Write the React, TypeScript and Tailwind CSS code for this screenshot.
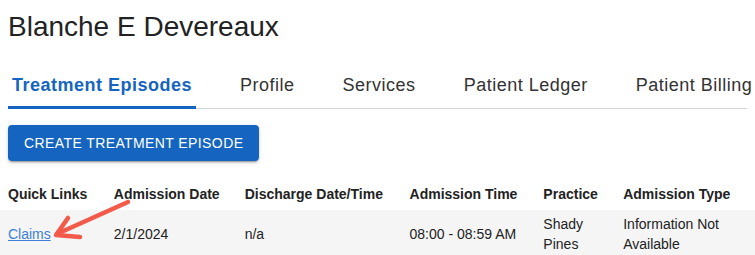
import React from "react";

const tabs = ["Treatment Episodes", "Profile", "Services", "Patient Ledger", "Patient Billing"];

const columns = [
  { label: "Quick Links", w: "w-[106px]" },
  { label: "Admission Date", w: "w-[131px]" },
  { label: "Discharge Date/Time", w: "w-[165px]" },
  { label: "Admission Time", w: "w-[134px]" },
  { label: "Practice", w: "w-[80px]" },
  { label: "Admission Type", w: "w-[140px]" },
];

export default function App() {
  return (
    <div
      className="relative h-[255px] w-full overflow-hidden bg-white text-[#222]"
      style={{ fontFamily: '"Liberation Sans", Arial, sans-serif' }}
    >
      <div className="px-2">
        <h1 className="mt-[11px] text-[28px] leading-[32px] font-normal text-[#222]">
          Blanche E Devereaux
        </h1>

        <div className="mt-[18px] flex h-12 gap-[40px] border-b border-[#d2d4d6] whitespace-nowrap">
          {tabs.map((t, i) => (
            <div
              key={t}
              className={
                i === 0
                  ? "relative flex items-center px-1 pt-px text-[18px] font-bold tracking-[0.5px] text-[#1565c0]"
                  : "relative flex items-center px-1 pt-px text-[18px] tracking-[0.5px] text-[#333]"
              }
            >
              {t}
              {i === 0 && (
                <span className="absolute right-0 -bottom-px left-0 h-[3px] bg-[#1565c0]" />
              )}
            </div>
          ))}
        </div>

        <button className="mt-4 h-9 rounded bg-[#1565c0] px-4 text-[14px] tracking-[0.4px] text-white uppercase shadow-[0_3px_1px_-2px_rgba(0,0,0,0.2),0_2px_2px_0_rgba(0,0,0,0.14),0_1px_5px_0_rgba(0,0,0,0.12)]">
          Create Treatment Episode
        </button>
      </div>

      <table className="mt-[17px] table-fixed border-collapse text-left text-[14px]">
        <thead>
          <tr className="h-8">
            {columns.map((c) => (
              <th key={c.label} className={`${c.w} px-2 font-bold whitespace-nowrap text-[#222]`}>
                {c.label}
              </th>
            ))}
          </tr>
        </thead>
        <tbody>
          <tr className="bg-[#f5f5f5] leading-5">
            <td className="px-2 py-1">
              <a className="text-[#3d80d3] underline">Claims</a>
            </td>
            <td className="px-2 py-1">2/1/2024</td>
            <td className="px-2 py-1">n/a</td>
            <td className="px-2 py-1 whitespace-nowrap">08:00 - 08:59 AM</td>
            <td className="px-2 py-1">Shady Pines</td>
            <td className="px-2 py-1">Information Not Available</td>
          </tr>
        </tbody>
      </table>

      <svg
        className="pointer-events-none absolute top-0 left-0"
        width="755"
        height="255"
        viewBox="0 0 755 255"
      >
        <g stroke="#f25a4a" strokeWidth="4.5" strokeLinecap="round" strokeLinejoin="round" fill="none">
          <line x1="128" y1="202" x2="59" y2="233" />
          <polyline points="68,218 56,235 80,237" />
        </g>
      </svg>
    </div>
  );
}
